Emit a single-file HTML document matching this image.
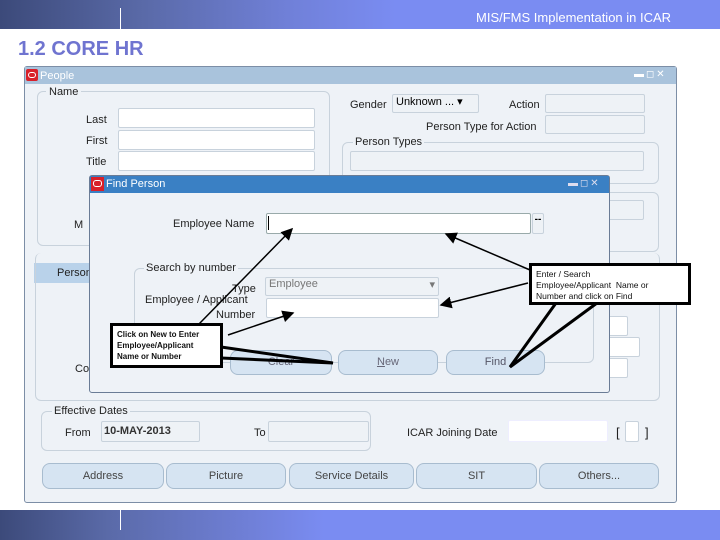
<!DOCTYPE html>
<html><head><meta charset="utf-8"><style>
*{margin:0;padding:0;box-sizing:border-box}
body{width:720px;height:540px;overflow:hidden;background:#fff;font-family:"Liberation Sans",sans-serif;position:relative}
.a{position:absolute}
.t{position:absolute;font-size:11px;color:#222;white-space:nowrap}
.in{position:absolute;background:#fff;border:1px solid #c8d2dc;border-radius:2px}
.ro{position:absolute;background:#eef2f6;border:1px solid #c8d2dc;border-radius:2px}
.grp{position:absolute;border:1px solid #c8d2dc;border-radius:6px}
.btn{position:absolute;background:#d6e4f2;border:1px solid #a8bccf;border-radius:8px;font-size:11px;color:#444;text-align:center}
.bn{position:absolute;font-size:8px;font-weight:bold;color:#111;line-height:11px;background:#fff;border:3px solid #000;padding:3px 4px;white-space:nowrap}
</style></head><body>
<div class="a" style="left:0;top:0;width:720px;height:29px;background:linear-gradient(90deg,#3c4a7a 0,#5a6aa8 20%,#7080d8 40%,#7a8cf2 55%,#7a8cf2 100%)"></div>
<div class="a" style="left:120px;top:8px;width:1px;height:21px;background:#fff"></div>
<div class="t" style="left:476px;top:10px;font-size:13px;color:#fff">MIS/FMS Implementation in ICAR</div>
<div class="t" style="left:18px;top:38px;font-size:20px;font-weight:bold;color:#6f74d0">1.2 CORE HR</div>

<div class="a" style="left:24px;top:66px;width:653px;height:437px;background:#eef2f7;border:1px solid #7c8ea6;border-radius:3px"></div>
<div class="a" style="left:25px;top:67px;width:651px;height:17px;background:#a9c3dc"></div>
<div class="a" style="left:26px;top:69px;width:12px;height:12px;background:#d8202a;border-radius:2px"></div>
<div class="a" style="left:28px;top:72px;width:8px;height:6px;border:1.5px solid #fff;border-radius:3px"></div>
<div class="t" style="left:40px;top:70px;color:#fff">People</div>
<div class="a" style="left:634px;top:69px;width:40px;height:12px;background:#a9c3dc;font-size:10px;color:#fff;letter-spacing:2px">▬◻✕</div>

<div class="grp" style="left:37px;top:91px;width:293px;height:155px"></div>
<div class="t" style="left:46px;top:86px;background:#eef2f7;padding:0 3px">Name</div>
<div class="t" style="left:86px;top:114px">Last</div><div class="in" style="left:118px;top:108px;width:197px;height:20px"></div>
<div class="t" style="left:86px;top:135px">First</div><div class="in" style="left:118px;top:130px;width:197px;height:20px"></div>
<div class="t" style="left:86px;top:156px">Title</div><div class="in" style="left:118px;top:151px;width:197px;height:20px"></div>
<div class="t" style="left:74px;top:219px">M</div>

<div class="t" style="left:350px;top:99px">Gender</div><div class="ro" style="left:392px;top:94px;width:87px;height:19px;font-size:11px;padding-left:3px">Unknown ... ▾</div>
<div class="t" style="left:509px;top:99px">Action</div><div class="ro" style="left:545px;top:94px;width:100px;height:19px"></div>
<div class="t" style="left:426px;top:121px">Person Type for Action</div><div class="ro" style="left:545px;top:115px;width:100px;height:19px"></div>
<div class="grp" style="left:342px;top:142px;width:317px;height:42px"></div>
<div class="t" style="left:353px;top:136px;background:#eef2f7;padding:0 2px">Person Types</div>
<div class="ro" style="left:350px;top:151px;width:294px;height:20px"></div>
<div class="grp" style="left:342px;top:192px;width:317px;height:60px"></div>
<div class="ro" style="left:600px;top:200px;width:44px;height:20px"></div>
<div class="a" style="left:34px;top:263px;width:60px;height:20px;background:#b9d2ea"></div>
<div class="t" style="left:57px;top:267px">Person</div>
<div class="t" style="left:75px;top:363px">Co</div>
<div class="in" style="left:606px;top:316px;width:22px;height:20px"></div>
<div class="in" style="left:606px;top:337px;width:34px;height:20px"></div>
<div class="in" style="left:606px;top:358px;width:22px;height:20px"></div>
<div class="grp" style="left:35px;top:253px;width:625px;height:148px;border-top:none"></div>

<div class="grp" style="left:41px;top:411px;width:330px;height:40px"></div>
<div class="t" style="left:52px;top:405px;background:#eef2f7;padding:0 2px">Effective Dates</div>
<div class="t" style="left:65px;top:427px">From</div>
<div class="ro" style="left:101px;top:421px;width:99px;height:21px;font-weight:bold;font-size:11px;padding:3px 2px;color:#333">10-MAY-2013</div>
<div class="t" style="left:254px;top:427px">To</div><div class="ro" style="left:268px;top:421px;width:101px;height:21px"></div>
<div class="t" style="left:407px;top:427px">ICAR Joining Date</div>
<div class="in" style="left:508px;top:420px;width:100px;height:22px;border-color:#eef"></div>
<div class="t" style="left:616px;top:425px;font-size:13px">[</div><div class="in" style="left:625px;top:421px;width:14px;height:21px"></div><div class="t" style="left:645px;top:425px;font-size:13px">]</div>

<div class="btn" style="left:42px;top:463px;width:122px;height:26px;line-height:24px">Address</div>
<div class="btn" style="left:166px;top:463px;width:120px;height:26px;line-height:24px">Picture</div>
<div class="btn" style="left:289px;top:463px;width:125px;height:26px;line-height:24px">Service Details</div>
<div class="btn" style="left:416px;top:463px;width:121px;height:26px;line-height:24px">SIT</div>
<div class="btn" style="left:539px;top:463px;width:120px;height:26px;line-height:24px">Others...</div>

<!-- Find Person -->
<div class="a" style="left:89px;top:175px;width:521px;height:218px;background:#eef2f7;border:1px solid #6a7c96;border-radius:3px"></div>
<div class="a" style="left:90px;top:176px;width:519px;height:17px;background:#3a80c4"></div>
<div class="a" style="left:91px;top:177px;width:13px;height:14px;background:#d8202a"></div>
<div class="a" style="left:93px;top:180px;width:9px;height:7px;border:1.5px solid #fff;border-radius:3px"></div>
<div class="t" style="left:106px;top:178px;color:#fff">Find Person</div>
<div class="a" style="left:568px;top:178px;width:38px;height:12px;font-size:10px;color:#dde;letter-spacing:2px">▬◻✕</div>
<div class="t" style="left:173px;top:218px">Employee Name</div>
<div class="in" style="left:266px;top:213px;width:265px;height:21px;border-color:#9aa"></div>
<div class="a" style="left:268px;top:216px;width:1px;height:14px;background:#000"></div>
<div class="ro" style="left:532px;top:213px;width:12px;height:21px;font-size:10px;font-weight:bold;text-align:center">--</div>
<div class="grp" style="left:134px;top:268px;width:460px;height:95px"></div>
<div class="t" style="left:144px;top:262px;background:#eef2f7;padding:0 2px">Search by number</div>
<div class="t" style="left:232px;top:283px">Type</div>
<div class="ro" style="left:265px;top:277px;width:174px;height:19px;font-size:11px;color:#777;padding-left:3px">Employee<span style="float:right;padding-right:3px">▾</span></div>
<div class="t" style="left:145px;top:294px">Employee / Applicant</div>
<div class="t" style="left:216px;top:309px">Number</div>
<div class="in" style="left:266px;top:298px;width:173px;height:20px"></div>
<div class="btn" style="left:230px;top:350px;width:102px;height:25px;line-height:23px;color:#667">Clear</div>
<div class="btn" style="left:338px;top:350px;width:100px;height:25px;line-height:23px;color:#667"><u>N</u>ew</div>
<div class="btn" style="left:446px;top:350px;width:99px;height:25px;line-height:23px;color:#556">Find</div>

<svg class="a" style="left:0;top:0" width="720" height="540">
<defs><marker id="m" markerWidth="8" markerHeight="8" refX="7" refY="4" orient="auto"><path d="M0,0 L8,4 L0,8z" fill="#000"/></marker></defs>
<g stroke="#000" stroke-width="1.5" fill="none">
<line x1="199" y1="324" x2="292" y2="229" marker-end="url(#m)"/>
<line x1="228" y1="335" x2="293" y2="313" marker-end="url(#m)"/>
<line x1="530" y1="270" x2="446" y2="234" marker-end="url(#m)"/>
<line x1="528" y1="283" x2="441" y2="305" marker-end="url(#m)"/>
</g>
<g stroke="#000" stroke-width="3" fill="none">
<polyline points="221,347 333,363 221,358"/>
<polyline points="556,303 510,367 597,303"/>
</g>
</svg>
<div class="bn" style="left:110px;top:323px;width:113px;height:45px">Click on New to Enter<br>Employee/Applicant<br>Name or Number</div>
<div class="bn" style="left:529px;top:263px;width:162px;height:42px;font-weight:normal;font-size:8.5px">Enter / Search<br>Employee/Applicant&nbsp; Name or<br>Number and click on Find</div>

<div class="a" style="left:0;top:510px;width:720px;height:30px;background:linear-gradient(90deg,#3c4a7a 0,#5a6aa8 15%,#7080d8 35%,#7a8cf2 45%,#7a8cf2 100%)"></div>
<div class="a" style="left:120px;top:510px;width:1px;height:20px;background:#fff"></div>
</body></html>
